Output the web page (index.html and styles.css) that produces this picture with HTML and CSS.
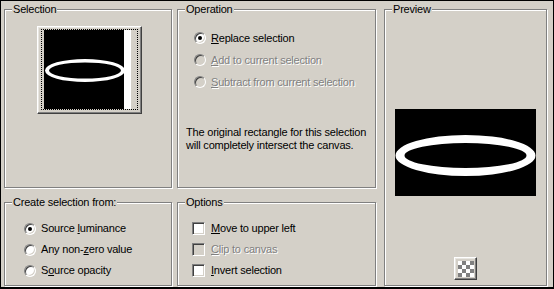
FILE: index.html
```html
<!DOCTYPE html>
<html lang="en">
<head>
  <meta charset="UTF-8" />
  <title>Selection From Mask</title>
  <link rel="stylesheet" href="styles.css">
</head>
<body>
  <div class="dialog">
    <!-- Selection thumbnail -->
    <div class="group group-selection">
      <span class="group-title">Selection</span>
      <div class="thumb">
        <div class="thumb-focus">
          <svg class="thumb-img" width="87" height="79" viewBox="0 0 87 79">
            <rect x="0" y="0" width="80" height="79" fill="#000"/>
            <rect x="80" y="0" width="7" height="79" fill="#fff"/>
            <path fill="#fff" fill-rule="evenodd" d="M1 40.5a40 11.5 0 1 0 80 0a40 11.5 0 1 0 -80 0z M5 40.5a36 8 0 1 0 72 0a36 8 0 1 0 -72 0z"/>
          </svg>
        </div>
      </div>
    </div>

    <!-- Operation -->
    <div class="group group-operation">
      <span class="group-title">Operation</span>
      <div class="choice-list">
        <div class="choice"><span class="radio checked"></span><span><u>R</u>eplace selection</span></div>
        <div class="choice disabled"><span class="radio"></span><span><u>A</u>dd to current selection</span></div>
        <div class="choice disabled"><span class="radio"></span><span><u>S</u>ubtract from current selection</span></div>
      </div>
      <p class="note">The original rectangle for this selection<br>will completely intersect the canvas.</p>
    </div>

    <!-- Preview -->
    <div class="group group-preview">
      <span class="group-title">Preview</span>
      <svg class="preview-img" width="141" height="87" viewBox="0 0 141 87">
        <rect x="0" y="0" width="141" height="87" fill="#000"/>
        <path fill="#fff" fill-rule="evenodd" d="M0.5 46.5a70 20.5 0 1 0 140 0a70 20.5 0 1 0 -140 0z M9.5 46.5a61 12.5 0 1 0 122 0a61 12.5 0 1 0 -122 0z"/>
      </svg>
      <div class="checker-btn"><span class="checker"></span></div>
    </div>

    <!-- Create selection from -->
    <div class="group group-source">
      <span class="group-title">Create selection from:</span>
      <div class="choice-list">
        <div class="choice"><span class="radio checked"></span><span>Source <u>l</u>uminance</span></div>
        <div class="choice"><span class="radio"></span><span>Any non-<u>z</u>ero value</span></div>
        <div class="choice"><span class="radio"></span><span>S<u>o</u>urce opacity</span></div>
      </div>
    </div>

    <!-- Options -->
    <div class="group group-options">
      <span class="group-title">Options</span>
      <div class="choice-list">
        <div class="choice"><span class="check"></span><span><u>M</u>ove to upper left</span></div>
        <div class="choice disabled"><span class="check"></span><span><u>C</u>lip to canvas</span></div>
        <div class="choice"><span class="check"></span><span><u>I</u>nvert selection</span></div>
      </div>
    </div>
  </div>
</body>
</html>
```

FILE: styles.css
```css
* {
  margin: 0;
  padding: 0;
  box-sizing: border-box;
}

body {
  background: #000;
  font-family: 'Liberation Sans', Arial, sans-serif;
  font-size: 11px;
  line-height: 13px;
  letter-spacing: -0.2px;
  color: #000;
}

.dialog {
  width: 554px;
  height: 289px;
  background: #d4d0c8;
  border: 1px solid #000;
  border-bottom-width: 2px;
  padding: 8px 3px 1px 3px;
  display: grid;
  grid-template-columns: 168px 199px 166px;
  grid-template-rows: 179px 84px;
  column-gap: 5px;
  row-gap: 14px;
}

/* etched group box */
.group {
  position: relative;
  border: 1px solid #808080;
  box-shadow: inset 1px 1px 0 #fff, 1px 1px 0 #fff;
}

.group-title {
  position: absolute;
  top: -7px;
  left: 7px;
  padding: 0 1px;
  background: #d4d0c8;
  white-space: nowrap;
}

.group-selection { grid-column: 1; grid-row: 1; }
.group-operation { grid-column: 2; grid-row: 1; }
.group-source    { grid-column: 1; grid-row: 2; }
.group-options   { grid-column: 2; grid-row: 2; }

.group-preview {
  grid-column: 3;
  grid-row: 1 / span 2;
  margin-left: 3px;
  display: flex;
  flex-direction: column;
  align-items: center;
  padding-top: 99px;
}

/* selection thumbnail button */
.thumb {
  width: 105px;
  height: 88px;
  margin: 16px 0 0 32px;
  background: #d4d0c8;
  border: 1px solid;
  border-color: #fff #404040 #404040 #fff;
  box-shadow: inset -1px -1px 0 #808080, inset 1px 1px 0 #e8e6e1;
}

.thumb-focus {
  width: 97px;
  height: 81px;
  margin: 2px 0 0 3px;
  border: 1px dotted #000;
  padding-left: 2px;
}

.thumb-img {
  display: block;
}

/* radio / checkbox rows */
.choice-list {
  display: flex;
  flex-direction: column;
}

.choice {
  display: flex;
  align-items: center;
  white-space: nowrap;
}

.group-operation .choice-list { padding: 17px 0 0 16px; }
.group-operation .choice { height: 22px; }
.group-source .choice-list { padding: 15px 0 0 19px; }
.group-source .choice { height: 21px; }
.group-options .choice-list { padding: 15px 0 0 14px; }
.group-options .choice { height: 21px; }

.radio {
  position: relative;
  flex: none;
  width: 12px;
  height: 12px;
  margin-right: 5px;
  border-radius: 50%;
  background: #fff;
  border: 1px solid;
  border-color: #808080 #fff #fff #808080;
  box-shadow: inset 1px 1px 0 #404040, inset -1px -1px 0 #d4d0c8;
}

.radio.checked::after {
  content: "";
  position: absolute;
  left: 3px;
  top: 3px;
  width: 4px;
  height: 4px;
  border-radius: 50%;
  background: #000;
}

.check {
  flex: none;
  width: 13px;
  height: 13px;
  margin-right: 6px;
  background: #fff;
  border: 1px solid;
  border-color: #808080 #fff #fff #808080;
  box-shadow: inset 1px 1px 0 #404040, inset -1px -1px 0 #d4d0c8;
}

.choice.disabled {
  color: #808080;
  text-shadow: 1px 1px 0 #fff;
}

.choice.disabled .radio,
.choice.disabled .check {
  background: #d4d0c8;
}

.note {
  margin: 33px 0 0 8px;
}

/* preview */
.preview-img {
  display: block;
  flex: none;
}

.checker-btn {
  width: 23px;
  height: 23px;
  margin-top: 61px;
  display: flex;
  align-items: center;
  justify-content: center;
  background: #d4d0c8;
  border: 1px solid;
  border-color: #fff #404040 #404040 #fff;
  box-shadow: inset -1px -1px 0 #808080, inset 1px 1px 0 #e8e6e1;
}

.checker {
  width: 16px;
  height: 16px;
  background-color: #fff;
  background-image:
    linear-gradient(45deg, #808080 25%, transparent 25%, transparent 75%, #808080 75%),
    linear-gradient(45deg, #808080 25%, transparent 25%, transparent 75%, #808080 75%);
  background-size: 8px 8px;
  background-position: 0 0, 4px 4px;
}
```
